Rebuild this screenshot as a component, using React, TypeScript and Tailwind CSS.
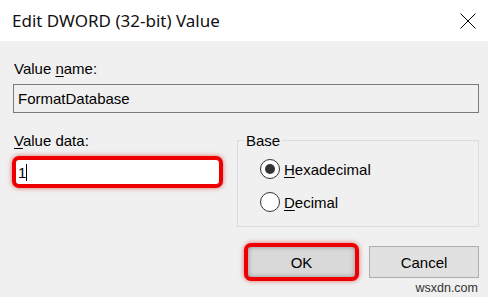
import React from "react";

const Radio = ({ checked }: { checked?: boolean }) => (
    <span className="w-[20px] h-[20px] rounded-full border-[1.5px] border-[#333333] bg-white flex items-center justify-center">
        {checked && <span className="w-[10px] h-[10px] rounded-full bg-[#333333]" />}
    </span>
);

const App = () => {
    return (
        <div className="w-[488px] h-[297px] bg-[#f0f0f0] flex flex-col text-black overflow-hidden font-['Liberation_Sans',Arial,sans-serif] text-[15px] leading-[17px]">
            {/* title bar */}
            <div className="h-[41px] bg-white flex items-center justify-between pl-[12px] pr-[11px]">
                <span className="font-['Noto_Sans','Open_Sans',sans-serif] text-[17px] leading-[24px] text-[#111111]">
                    Edit DWORD (32-bit) Value
                </span>
                <svg width="16" height="16" viewBox="0 0 16 16" className="mr-[1px]">
                    <path d="M0.5 0.5 L15.5 15.5 M15.5 0.5 L0.5 15.5" stroke="#000" strokeWidth="1" fill="none" />
                </svg>
            </div>

            <div className="flex flex-col pl-[13px] pr-[9px] pt-[19px]">
                <div className="pl-[1px]">
                    Value <span className="underline underline-offset-2">n</span>ame:
                </div>
                <div className="mt-[7px] h-[29px] border border-[#7a7a7a] bg-[#f0f0f0] flex items-center pl-[4px]">
                    FormatDatabase
                </div>

                <div className="mt-[19px] flex justify-between">
                    <div className="flex flex-col">
                        <div className="pl-[1px]">
                            <span className="underline underline-offset-2">V</span>alue data:
                        </div>
                        <div className="mt-[7px] -ml-[1px] w-[211px] h-[32px] border-[4px] border-[#ee0000] rounded-[7px] bg-white shadow-[0_0_5px_rgba(200,0,0,0.55)] flex items-center pl-[2px]">
                            <span>1</span>
                            <span className="w-[1px] h-[17px] bg-black" />
                        </div>
                    </div>

                    <fieldset className="w-[242px] h-[95px] border border-[#dcdcdc] pl-[6px]">
                        <legend className="px-[2px]">Base</legend>
                        <label className="mt-[10px] ml-[16px] flex items-center gap-[4px] h-[20px]">
                            <Radio checked />
                            <span>
                                <span className="underline underline-offset-2">H</span>exadecimal
                            </span>
                        </label>
                        <label className="mt-[13px] ml-[16px] flex items-center gap-[4px] h-[20px]">
                            <Radio />
                            <span>
                                <span className="underline underline-offset-2">D</span>ecimal
                            </span>
                        </label>
                    </fieldset>
                </div>

                <div className="mt-[16px] flex justify-end items-center gap-[10px]">
                    <div className="w-[115px] h-[38px] border-[4px] border-[#ee0000] rounded-[7px] bg-[#d9d9d9] shadow-[0_0_5px_rgba(200,0,0,0.55),inset_0_0_5px_rgba(0,0,0,0.35)] flex items-center justify-center">
                        OK
                    </div>
                    <div className="w-[110px] h-[32px] border border-[#adadad] bg-[#e1e1e1] flex items-center justify-center">
                        Cancel
                    </div>
                </div>
                <div className="text-right text-[12.5px] leading-[14px] text-[#333333] pr-[1px]">wsxdn.com</div>
            </div>
        </div>
    );
};

export default App;
